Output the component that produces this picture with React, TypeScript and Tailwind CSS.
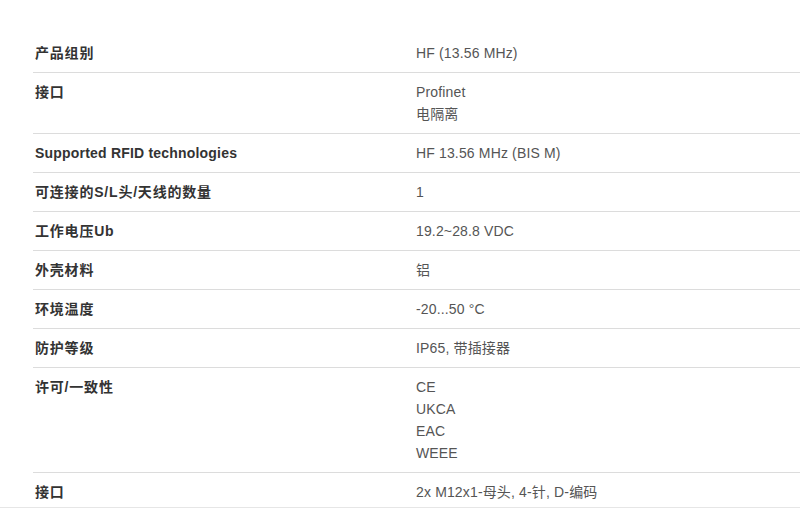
import React from "react";

const rows: { label: string; values: string[] }[] = [
  { label: "产品组别", values: ["HF (13.56 MHz)"] },
  { label: "接口", values: ["Profinet", "电隔离"] },
  { label: "Supported RFID technologies", values: ["HF 13.56 MHz (BIS M)"] },
  { label: "可连接的S/L头/天线的数量", values: ["1"] },
  { label: "工作电压Ub", values: ["19.2~28.8 VDC"] },
  { label: "外壳材料", values: ["铝"] },
  { label: "环境温度", values: ["-20...50 °C"] },
  { label: "防护等级", values: ["IP65, 带插接器"] },
  { label: "许可/一致性", values: ["CE", "UKCA", "EAC", "WEEE"] },
  { label: "接口", values: ["2x M12x1-母头, 4-针, D-编码"] },
];

const cjk = /[\u4e00-\u9fff]/;

export default function App() {
  return (
    <div
      className="relative h-[515px] w-[800px] overflow-hidden bg-white"
      style={{ fontFamily: '"Liberation Sans", Arial, "Noto Sans CJK SC", sans-serif' }}
    >
      <div className="ml-[33px] mt-[34px] w-[800px]">
        {rows.map((r, i) => (
          <div key={i} className="flex border-b border-[#dcdcdc] pt-2 pb-2">
            <div
              className={
                cjk.test(r.label)
                  ? "w-[383px] pl-[2px] text-[14px] font-bold leading-[22px] tracking-[0.8px] text-[#333333]"
                  : "w-[383px] pl-[2px] text-[14px] font-bold leading-[22px] tracking-[0.2px] text-[#333333]"
              }
            >
              {r.label}
            </div>
            <div className="flex flex-col text-[14px] leading-[22px] tracking-[0.15px] text-[#555555]">
              {r.values.map((v, j) => (
                <div key={j}>{v}</div>
              ))}
            </div>
          </div>
        ))}
      </div>
      <div className="absolute left-0 top-[507px] h-[8px] w-[800px] border-t border-[#e6e6e6] bg-white" />
    </div>
  );
}
